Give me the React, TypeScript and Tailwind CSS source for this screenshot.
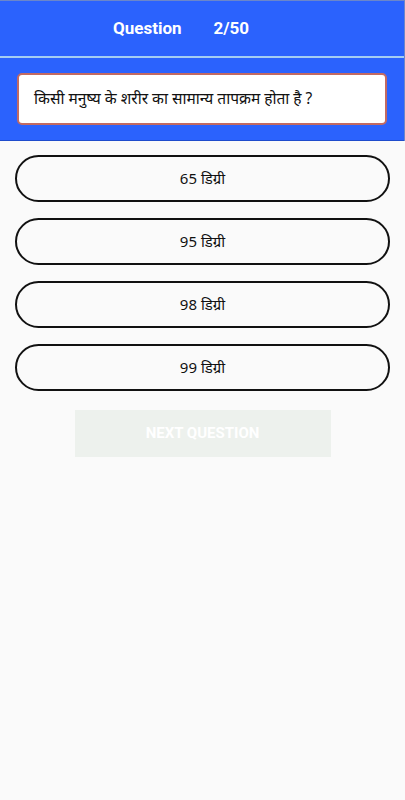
import * as React from "react";

const options = ["65 डिग्री", "95 डिग्री", "98 डिग्री", "99 डिग्री"];

export default function App() {
    return (
        <div className="min-h-[800px] bg-[#fafafa] font-['Roboto','Noto_Sans','Noto_Sans_Devanagari',sans-serif]">
            <div className="border-t border-r border-[#6b86c9] bg-[#2b62fd]">
                <div className="flex h-[55px] items-center gap-[32px] pl-[113px] text-[17px] font-bold text-white">
                    <span>Question</span>
                    <span>2/50</span>
                </div>
                <div className="h-[2px] bg-[#a5cdf2]" />
                <div className="border-b border-[#1f4ccc] px-[17px] pt-[15px] pb-[15px]">
                    <div className="flex h-[52px] items-center rounded-[5px] border-2 border-[#c26a62] bg-white pl-[15px] font-['Noto_Sans','Noto_Sans_Devanagari',sans-serif] text-[15.5px] text-[#111]">
                        किसी मनुष्य के शरीर का सामान्य तापक्रम होता है ?
                    </div>
                </div>
            </div>

            <div className="mt-[14px] flex flex-col gap-[16px] px-[15px]">
                {options.map((o) => (
                    <button
                        key={o}
                        className="flex h-[47px] items-center justify-center rounded-full border-2 border-[#111] font-['Noto_Sans','Noto_Sans_Devanagari',sans-serif] text-[15px] text-[#111]"
                    >
                        {o}
                    </button>
                ))}
            </div>

            <div className="mt-[19px] flex justify-center">
                <button className="h-[47px] w-[256px] bg-[#edf1ed] text-[15px] font-bold uppercase text-white">
                    Next Question
                </button>
            </div>
        </div>
    );
}
